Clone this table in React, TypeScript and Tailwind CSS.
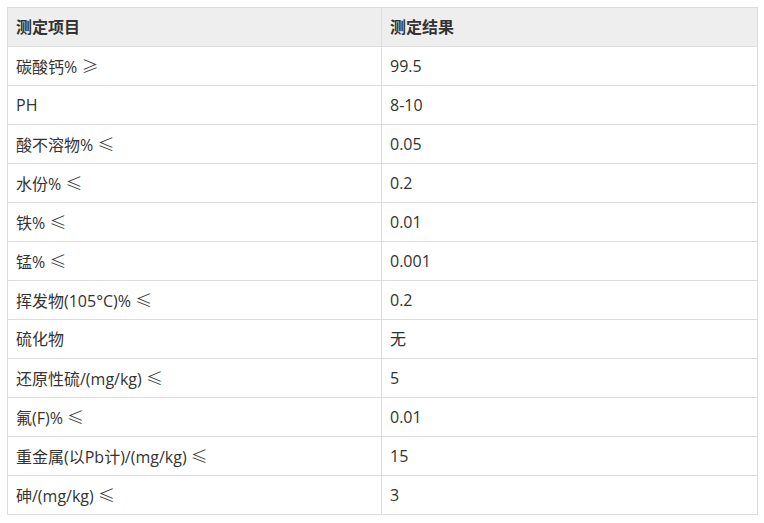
import React from "react";

const rows: [string, string, string][] = [
  ["碳酸钙%", "≥", "99.5"],
  ["PH", "", "8-10"],
  ["酸不溶物%", "≤", "0.05"],
  ["水份%", "≤", "0.2"],
  ["铁%", "≤", "0.01"],
  ["锰%", "≤", "0.001"],
  ["挥发物(105°C)%", "≤", "0.2"],
  ["硫化物", "", "无"],
  ["还原性硫/(mg/kg)", "≤", "5"],
  ["氟(F)%", "≤", "0.01"],
  ["重金属(以Pb计)/(mg/kg)", "≤", "15"],
  ["砷/(mg/kg)", "≤", "3"],
];

export default function App() {
  return (
    <div className="w-[764px] h-[523px] bg-white pt-[7px] pl-[7px] text-[16px] leading-[20px] text-[#333333] [font-family:'Open_Sans','Noto_Sans_CJK_SC',sans-serif]">
      <table className="w-[750px] border-collapse table-fixed">
        <colgroup>
          <col className="w-[374px]" />
          <col className="w-[376px]" />
        </colgroup>
        <thead>
          <tr className="bg-[#eeeeee] h-[39px]">
            <th className="border border-[#dddddd] text-left font-bold px-[8px] py-0">测定项目</th>
            <th className="border border-[#dddddd] text-left font-bold px-[8px] py-0">测定结果</th>
          </tr>
        </thead>
        <tbody>
          {rows.map(([a, sym, b], i) => (
            <tr key={i} className="h-[39px]">
              <td className="border border-[#dddddd] px-[8px] py-0">
                {a}
                {sym && (
                  <>
                    {" "}
                    <span className="[font-family:'Noto_Sans_CJK_SC',sans-serif] text-[17px] font-light">{sym}</span>
                  </>
                )}
              </td>
              <td className="border border-[#dddddd] px-[8px] py-0">{b}</td>
            </tr>
          ))}
        </tbody>
      </table>
    </div>
  );
}
